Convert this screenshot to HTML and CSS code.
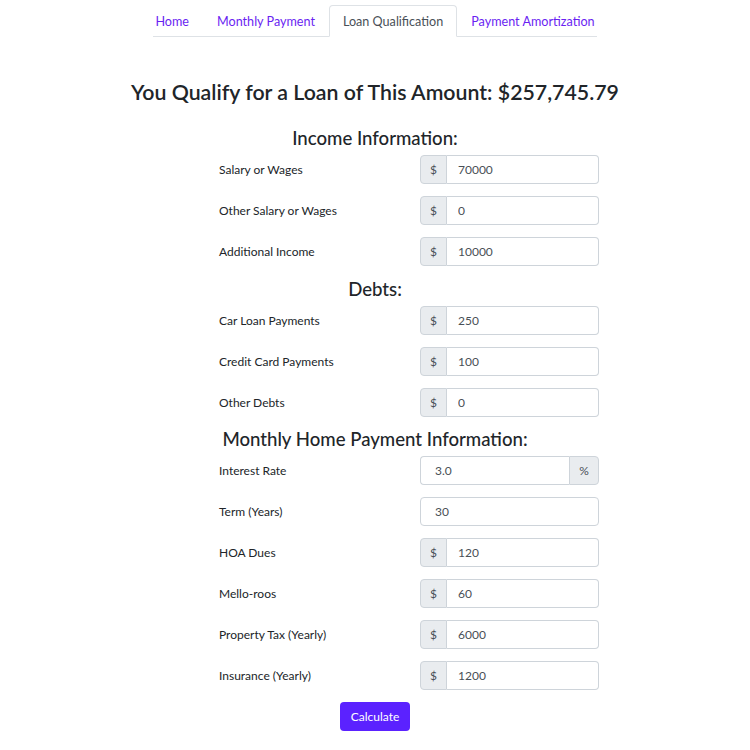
FILE: index.html
```html
<!DOCTYPE html>
<html>
<head>
<meta charset="utf-8">
<link rel="stylesheet" href="styles.css">
</head>
<body>
<nav class="tabs">
  <a class="tab">Home</a>
  <a class="tab">Monthly Payment</a>
  <a class="tab active">Loan Qualification</a>
  <a class="tab">Payment Amortization</a>
</nav>
<h1 class="title">You Qualify for a Loan of This Amount: $257,745.79</h1>
<form class="form">
  <h2 class="section">Income Information:</h2>
  <div class="row"><label>Salary or Wages</label><div class="group"><span class="addon">$</span><input value="70000"></div></div>
  <div class="row"><label>Other Salary or Wages</label><div class="group"><span class="addon">$</span><input value="0"></div></div>
  <div class="row"><label>Additional Income</label><div class="group"><span class="addon">$</span><input value="10000"></div></div>
  <h2 class="section">Debts:</h2>
  <div class="row"><label>Car Loan Payments</label><div class="group"><span class="addon">$</span><input value="250"></div></div>
  <div class="row"><label>Credit Card Payments</label><div class="group"><span class="addon">$</span><input value="100"></div></div>
  <div class="row"><label>Other Debts</label><div class="group"><span class="addon">$</span><input value="0"></div></div>
  <h2 class="section section-tight">Monthly Home Payment Information:</h2>
  <div class="row"><label>Interest Rate</label><div class="group"><input class="first" value="3.0"><span class="addon addon-end">%</span></div></div>
  <div class="row"><label>Term (Years)</label><div class="group"><input class="solo" value="30"></div></div>
  <div class="row"><label>HOA Dues</label><div class="group"><span class="addon">$</span><input value="120"></div></div>
  <div class="row"><label>Mello-roos</label><div class="group"><span class="addon">$</span><input value="60"></div></div>
  <div class="row"><label>Property Tax (Yearly)</label><div class="group"><span class="addon">$</span><input value="6000"></div></div>
  <div class="row"><label>Insurance (Yearly)</label><div class="group"><span class="addon">$</span><input value="1200"></div></div>
  <div class="actions"><button type="button" class="btn">Calculate</button></div>
</form>
</body>
</html>
```
FILE: styles.css
```css
* { box-sizing: border-box; }
body {
  margin: 0;
  font-family: Lato, "Open Sans", sans-serif;
  color: #212529;
  background: #fff;
}
.tabs {
  display: flex;
  justify-content: center;
  width: 444px;
  margin: 5px auto 0;
  border-bottom: 1px solid #dee2e6;
}
.tab {
  display: block;
  flex: none;
  height: 32px;
  padding: 0 13px;
  line-height: 31px;
  font-size: 12.6px;
  white-space: nowrap;
  color: #6a1ff2;
  border: 1px solid transparent;
  border-top-left-radius: 4px;
  border-top-right-radius: 4px;
  margin-bottom: -1px;
}
.tab.active {
  color: #495057;
  border-color: #dee2e6 #dee2e6 #fff;
  background: #fff;
}
.title {
  margin: 41px 0 0;
  text-align: center;
  font-size: 21.3px;
  font-weight: 600;
  line-height: 28px;
}
.form {
  width: 448px;
  margin: 0 auto;
  padding-left: 68px;
}
.section {
  text-align: center;
  margin: 3px 0 6px -68px;
  font-size: 18.6px;
  font-weight: 500;
  line-height: 22px;
}
.form > .section:first-child { margin-top: 21px; }
.form > .section-tight { margin-top: -1px; }
.row {
  display: flex;
  align-items: center;
  height: 29px;
  margin-bottom: 12px;
}
.row label {
  width: 201px;
  font-size: 12px;
}
.group {
  display: flex;
  width: 179px;
  height: 29px;
}
.addon {
  display: flex;
  align-items: center;
  justify-content: center;
  width: 27px;
  font-size: 12px;
  color: #495057;
  background: #e9ecef;
  border: 1px solid #ced4da;
  border-radius: 4px 0 0 4px;
}
.addon-end {
  width: 30px;
  border-radius: 0 4px 4px 0;
}
.group input {
  flex: 1;
  min-width: 0;
  height: 29px;
  padding: 0 11px;
  font-family: inherit;
  font-size: 12px;
  color: #495057;
  border: 1px solid #ced4da;
  border-left: 0;
  border-radius: 0 4px 4px 0;
  outline: none;
}
.group input.first {
  border-left: 1px solid #ced4da;
  border-right: 0;
  border-radius: 4px 0 0 4px;
  padding-left: 14px;
}
.group input.solo {
  border-left: 1px solid #ced4da;
  border-radius: 4px;
  padding-left: 14px;
}
.actions {
  display: flex;
  justify-content: center;
  margin-left: -68px;
}
.btn {
  height: 29px;
  padding: 0 11px;
  font-family: inherit;
  font-size: 12px;
  color: #fff;
  background: #5b22ff;
  border: 0;
  border-radius: 4px;
}
```
